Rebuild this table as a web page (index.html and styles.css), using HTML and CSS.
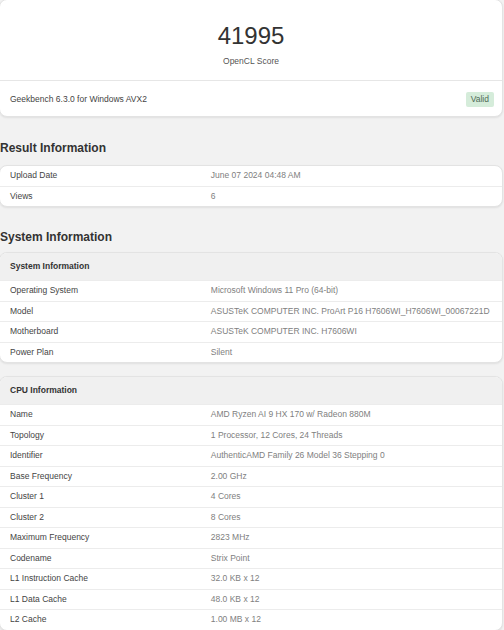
FILE: index.html
```html
<!DOCTYPE html>
<html>
<head>
<meta charset="utf-8">
<link rel="stylesheet" href="styles.css">
</head>
<body>
<div class="page">
  <div class="card score-card">
    <div class="score-main">
      <div class="score">41995</div>
      <div class="score-label">OpenCL Score</div>
    </div>
    <div class="score-foot">
      <span>Geekbench 6.3.0 for Windows AVX2</span>
      <span class="badge">Valid</span>
    </div>
  </div>

  <h2 class="section-title first">Result Information</h2>
  <div class="card table">
    <div class="row"><div class="label">Upload Date</div><div class="value">June 07 2024 04:48 AM</div></div>
    <div class="row"><div class="label">Views</div><div class="value">6</div></div>
  </div>

  <h2 class="section-title second">System Information</h2>
  <div class="card table">
    <div class="head">System Information</div>
    <div class="row"><div class="label">Operating System</div><div class="value">Microsoft Windows 11 Pro (64-bit)</div></div>
    <div class="row"><div class="label">Model</div><div class="value">ASUSTeK COMPUTER INC. ProArt P16 H7606WI_H7606WI_00067221D</div></div>
    <div class="row"><div class="label">Motherboard</div><div class="value">ASUSTeK COMPUTER INC. H7606WI</div></div>
    <div class="row"><div class="label">Power Plan</div><div class="value">Silent</div></div>
  </div>

  <div class="card table cpu">
    <div class="head">CPU Information</div>
    <div class="row"><div class="label">Name</div><div class="value">AMD Ryzen AI 9 HX 170 w/ Radeon 880M</div></div>
    <div class="row"><div class="label">Topology</div><div class="value">1 Processor, 12 Cores, 24 Threads</div></div>
    <div class="row"><div class="label">Identifier</div><div class="value">AuthenticAMD Family 26 Model 36 Stepping 0</div></div>
    <div class="row"><div class="label">Base Frequency</div><div class="value">2.00 GHz</div></div>
    <div class="row"><div class="label">Cluster 1</div><div class="value">4 Cores</div></div>
    <div class="row"><div class="label">Cluster 2</div><div class="value">8 Cores</div></div>
    <div class="row"><div class="label">Maximum Frequency</div><div class="value">2823 MHz</div></div>
    <div class="row"><div class="label">Codename</div><div class="value">Strix Point</div></div>
    <div class="row"><div class="label">L1 Instruction Cache</div><div class="value">32.0 KB x 12</div></div>
    <div class="row"><div class="label">L1 Data Cache</div><div class="value">48.0 KB x 12</div></div>
    <div class="row"><div class="label">L2 Cache</div><div class="value">1.00 MB x 12</div></div>
  </div>
</div>
</body>
</html>
```

FILE: styles.css
```css
html, body {
  margin: 0;
  padding: 0;
  background: #f2f2f2;
}
body {
  font-family: "Liberation Sans", Arial, sans-serif;
  font-size: 8.5px;
  color: #444;
  overflow: hidden;
  height: 630px;
}
.page {
  width: 504px;
  display: flex;
  flex-direction: column;
}
.card {
  background: #fff;
  border: 1px solid #e3e3e3;
  border-radius: 8px;
  box-shadow: 0 1px 2px rgba(0,0,0,0.08);
  overflow: hidden;
  margin: 0 1px 0 -1px;
}
.score-card {
  margin-top: -1px;
}
.score-main {
  display: flex;
  flex-direction: column;
  align-items: center;
  padding: 22px 0 13px;
  border-bottom: 1px solid #e6e6e6;
}
.score {
  font-size: 24px;
  line-height: 28px;
  color: #333;
}
.score-label {
  margin-top: 5px;
  line-height: 12px;
  color: #555;
}
.score-foot {
  display: flex;
  justify-content: space-between;
  align-items: center;
  padding: 10px 8px 9px 10px;
  height: 16px;
  color: #444;
}
.badge {
  background: #d5ecda;
  color: #4e6a55;
  border-radius: 2px;
  padding: 0 5px;
  line-height: 15px;
}
.section-title {
  font-size: 12px;
  line-height: 14px;
  font-weight: bold;
  color: #333;
  margin: 23px 0 10px;
}
.section-title.first {
  margin-top: 24px;
}
.section-title.second {
  margin-bottom: 8px;
}
.table .head {
  background: #f0f0f0;
  font-weight: bold;
  color: #333;
  padding: 0 10px;
  line-height: 27px;
}
.row {
  display: grid;
  grid-template-columns: 40% 60%;
  line-height: 19.5px;
  border-top: 1px solid #ececec;
}
.table > .row:first-child {
  border-top: none;
}
.label {
  padding-left: 10px;
  color: #444;
}
.value {
  padding-left: 10px;
  color: #808080;
  white-space: nowrap;
}
.cpu {
  margin-top: 13px;
}
```
